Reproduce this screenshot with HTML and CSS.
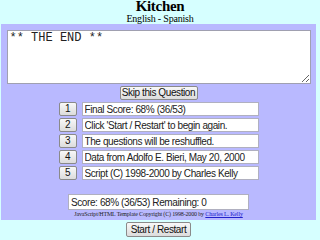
FILE: index.html
```html
<!DOCTYPE html>
<html lang="en">
<head>
  <meta charset="UTF-8">
  <title>Kitchen</title>
  <link rel="stylesheet" href="styles.css">
</head>
<body>
  <h1>Kitchen</h1>
  <p class="sub">English - Spanish</p>

  <div class="panel">
    <textarea class="pregunta">** THE END **</textarea>
    <button class="btn skip">Skip this Question</button>

    <div class="opciones">
      <div class="fila"><button class="btn num">1</button><input type="text" readonly value="Final Score: 68% (36/53)"></div>
      <div class="fila"><button class="btn num">2</button><input type="text" readonly value="Click 'Start / Restart' to begin again."></div>
      <div class="fila"><button class="btn num">3</button><input type="text" readonly value="The questions will be reshuffled."></div>
      <div class="fila"><button class="btn num">4</button><input type="text" readonly value="Data from Adolfo E. Bieri, May 20, 2000"></div>
      <div class="fila"><button class="btn num">5</button><input type="text" readonly value="Script (C) 1998-2000 by Charles Kelly"></div>
    </div>

    <input type="text" class="marcador" readonly value="Score: 68% (36/53) Remaining: 0">
    <p class="copy">JavaScript/HTML Template Copyright (C) 1998-2000 by <a href="#">Charles L. Kelly</a></p>
  </div>

  <div class="pie">
    <button class="btn start">Start / Restart</button>
  </div>
</body>
</html>
```

FILE: styles.css
```css
body {
  margin: 0;
  background: #d6ffff;
  font-family: "Liberation Sans", Arial, sans-serif;
}
h1 {
  margin: 0;
  font-family: "Liberation Serif", serif;
  font-size: 15px;
  line-height: 13px;
  letter-spacing: -0.3px;
  text-align: center;
}
.sub {
  margin: 0;
  font-family: "Liberation Serif", serif;
  font-size: 10px;
  line-height: 11px;
  letter-spacing: -0.2px;
  text-align: center;
}
.panel {
  margin: 0 4px 0 1px;
  padding: 6px 6px 2px;
  background: #b9b9ff;
  display: flex;
  flex-direction: column;
  align-items: center;
}
.pregunta {
  box-sizing: border-box;
  width: 304px;
  height: 54px;
  margin: 0;
  padding: 1px 2px;
  border: 1px solid #a0a0b0;
  font-family: "Liberation Mono", monospace;
  font-size: 12px;
  line-height: 13px;
  color: #222;
}
.btn {
  box-sizing: border-box;
  height: 14px;
  padding: 0 3px;
  border: 1px solid #8a8a8a;
  border-radius: 2px;
  background: linear-gradient(#f8f8f8, #dcdcdc);
  font-family: "Liberation Sans", Arial, sans-serif;
  font-size: 10px;
  letter-spacing: -0.4px;
  line-height: 12px;
  white-space: nowrap;
  color: #111;
}
.skip {
  width: 78px;
  padding: 0;
  margin-top: 2px;
}
.opciones {
  margin-top: 2px;
  display: flex;
  flex-direction: column;
  gap: 2px;
}
.fila {
  display: flex;
  gap: 5px;
}
.num {
  width: 18px;
  padding: 0;
}
.fila input, .marcador {
  box-sizing: border-box;
  width: 177px;
  height: 14px;
  margin: 0;
  padding: 0 2px;
  border: 1px solid #b0b0c0;
  background: #fff;
  font-family: "Liberation Sans", Arial, sans-serif;
  font-size: 10px;
  letter-spacing: -0.4px;
  color: #222;
}
.marcador {
  width: 181px;
  height: 16px;
  margin-top: 14px;
}
.copy {
  margin: 1px 0 0;
  font-family: "Liberation Serif", serif;
  font-size: 6px;
  line-height: 7px;
  letter-spacing: -0.15px;
  color: #222;
}
.copy a {
  color: #2020cc;
}
.pie {
  display: flex;
  justify-content: center;
  margin: 2px 4px 0 1px;
}
.start {
  width: 65px;
  height: 15px;
}
```
